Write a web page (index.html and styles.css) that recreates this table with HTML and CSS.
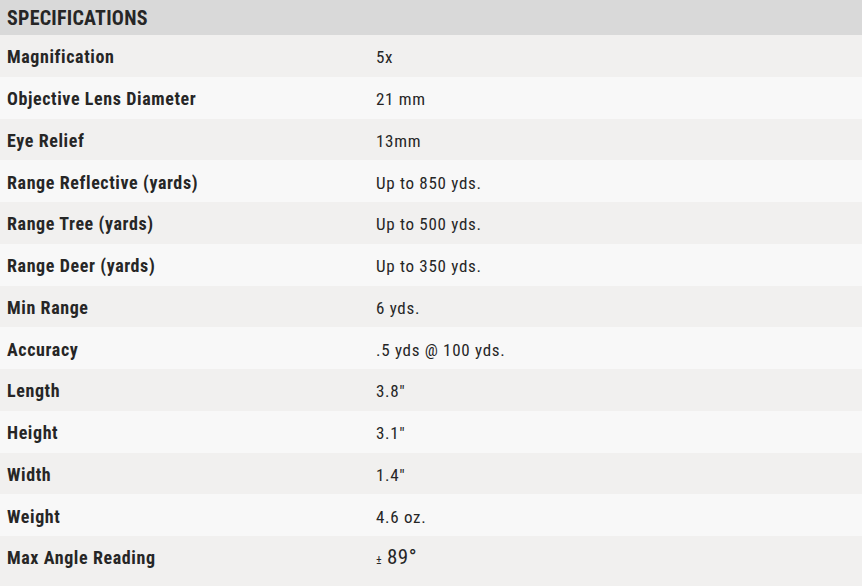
FILE: index.html
```html
<!DOCTYPE html>
<html>
<head>
<meta charset="utf-8">
<link rel="stylesheet" href="styles.css">
</head>
<body>
<section class="specs">
  <h2 class="specs-title">SPECIFICATIONS</h2>
  <div class="spec-row"><div class="spec-label">Magnification</div><div class="spec-value">5x</div></div>
  <div class="spec-row"><div class="spec-label">Objective Lens Diameter</div><div class="spec-value">21 mm</div></div>
  <div class="spec-row"><div class="spec-label">Eye Relief</div><div class="spec-value">13mm</div></div>
  <div class="spec-row"><div class="spec-label">Range Reflective (yards)</div><div class="spec-value">Up to 850 yds.</div></div>
  <div class="spec-row"><div class="spec-label">Range Tree (yards)</div><div class="spec-value">Up to 500 yds.</div></div>
  <div class="spec-row"><div class="spec-label">Range Deer (yards)</div><div class="spec-value">Up to 350 yds.</div></div>
  <div class="spec-row"><div class="spec-label">Min Range</div><div class="spec-value">6 yds.</div></div>
  <div class="spec-row"><div class="spec-label">Accuracy</div><div class="spec-value">.5 yds @ 100 yds.</div></div>
  <div class="spec-row"><div class="spec-label">Length</div><div class="spec-value">3.8"</div></div>
  <div class="spec-row"><div class="spec-label">Height</div><div class="spec-value">3.1"</div></div>
  <div class="spec-row"><div class="spec-label">Width</div><div class="spec-value">1.4"</div></div>
  <div class="spec-row"><div class="spec-label">Weight</div><div class="spec-value">4.6 oz.</div></div>
  <div class="spec-row spec-row-last"><div class="spec-label">Max Angle Reading</div><div class="spec-value"><span class="pm">±</span> <span class="big">89°</span></div></div>
</section>
</body>
</html>
```
FILE: styles.css
```css
html, body {
  margin: 0;
  padding: 0;
  background: #f1f0ef;
}
.specs {
  width: 862px;
  font-family: "Roboto Condensed", Roboto, "Liberation Sans Narrow", sans-serif;
  color: #262626;
}
.specs-title {
  margin: 0;
  height: 35px;
  box-sizing: border-box;
  padding: 1px 0 0 7px;
  background: #d9d9d9;
  font-size: 20px;
  font-weight: 700;
  line-height: 34px;
  letter-spacing: 0.25px;
  color: #262626;
}
.spec-row {
  display: grid;
  grid-template-columns: 369px 1fr;
  align-items: center;
  height: 41.75px;
  box-sizing: border-box;
  padding: 3px 0 0 7px;
  background: #f1f0ef;
}
.spec-row:nth-of-type(even) {
  background: #f8f8f8;
}
.spec-row-last {
  height: 50px;
  padding-bottom: 8.25px;
}
.spec-label {
  font-size: 18px;
  font-weight: 700;
  letter-spacing: 0.6px;
  line-height: 22px;
  color: #262626;
}
.spec-value {
  font-size: 17px;
  font-weight: 400;
  letter-spacing: 0.7px;
  line-height: 22px;
  color: #262626;
}
.pm {
  font-size: 12px;
}
.big {
  font-size: 21px;
  letter-spacing: 0.5px;
}
```
